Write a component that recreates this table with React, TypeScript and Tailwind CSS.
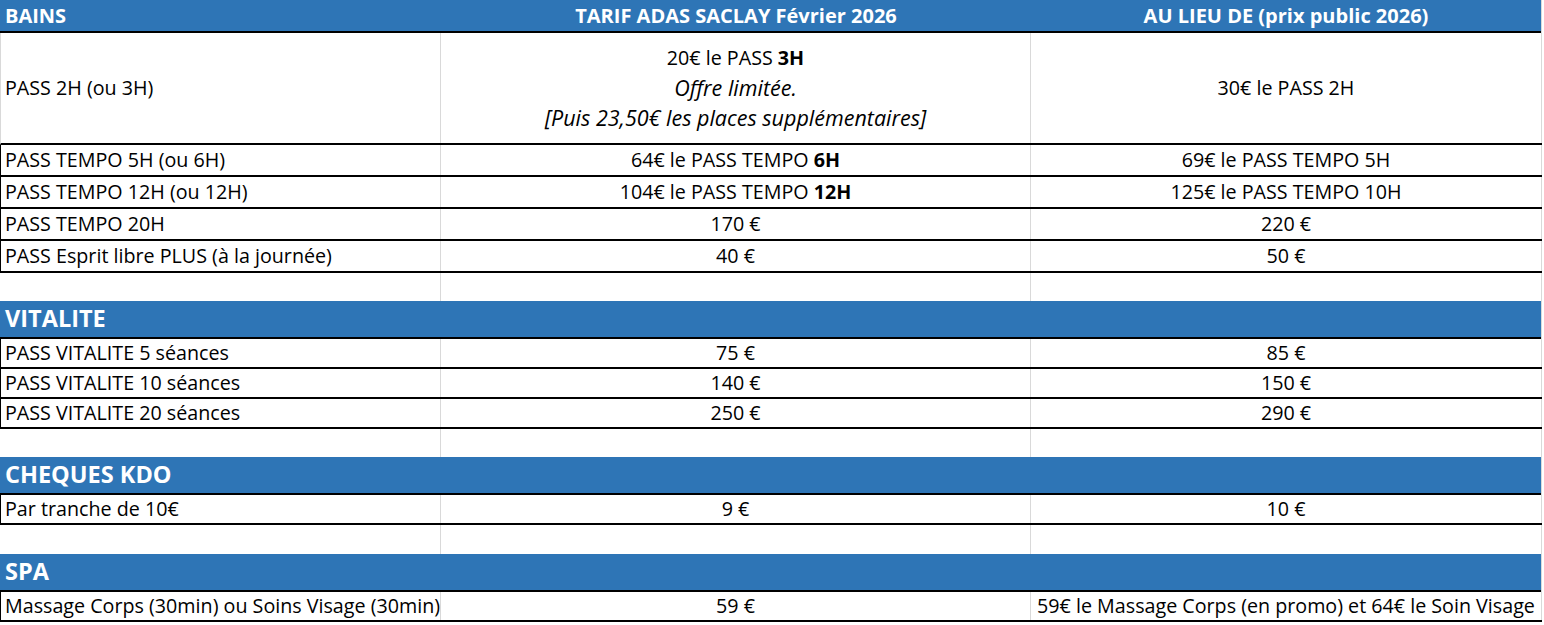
import type { ReactNode } from "react";

type Line = { label: ReactNode; adas: ReactNode; public: ReactNode };

const cellBase = "flex items-center border-r border-[#d9d9d9]";

const DataRow = ({
  label,
  adas,
  public: pub,
  height,
  leftGray,
}: Line & { height: string; leftGray?: boolean }) => (
  <div
    className={`flex w-[1542px] border-b-2 border-black ${height} ${
      leftGray ? "border-l border-l-[#d9d9d9]" : "border-l border-l-black"
    }`}
  >
    <div className={`${cellBase} w-[440px] pl-[4px] whitespace-nowrap`}>{label}</div>
    <div className={`${cellBase} w-[590px] justify-center text-center whitespace-nowrap`}>{adas}</div>
    <div className={`${cellBase} w-[511px] justify-center text-center whitespace-nowrap`}>{pub}</div>
  </div>
);

const EmptyRow = ({ height }: { height: string }) => (
  <div className={`flex w-[1542px] ${height}`}>
    <div className="w-[441px] border-r border-[#d9d9d9]" />
    <div className="w-[590px] border-r border-[#d9d9d9]" />
    <div className="w-[511px] border-r border-[#d9d9d9]" />
  </div>
);

const SectionRow = ({ title }: { title: string }) => (
  <div className="flex w-[1542px] border-r border-[#d9d9d9]">
    <div className="flex h-[38px] w-[1541px] items-center border-b-2 border-black bg-[#2e75b6] pl-[5px] text-[23.5px] font-bold text-white">
      {title}
    </div>
  </div>
);

const bains: Line[] = [
  {
    label: "PASS TEMPO 5H (ou 6H)",
    adas: (
      <span>
        64€ le PASS TEMPO <b>6H</b>
      </span>
    ),
    public: "69€ le PASS TEMPO 5H",
  },
  {
    label: "PASS TEMPO 12H (ou 12H)",
    adas: (
      <span>
        104€ le PASS TEMPO <b>12H</b>
      </span>
    ),
    public: "125€ le PASS TEMPO 10H",
  },
  { label: "PASS TEMPO 20H", adas: "170 €", public: "220 €" },
  { label: "PASS Esprit libre PLUS (à la journée)", adas: "40 €", public: "50 €" },
];

const vitalite: Line[] = [
  { label: "PASS VITALITE 5 séances", adas: "75 €", public: "85 €" },
  { label: "PASS VITALITE 10 séances", adas: "140 €", public: "150 €" },
  { label: "PASS VITALITE 20 séances", adas: "250 €", public: "290 €" },
];

export default function App() {
  return (
    <div className="h-[625px] w-[1544px] overflow-hidden bg-white font-['Open_Sans','Liberation_Sans',sans-serif] text-[19.7px] text-black">
      {/* header */}
      <div className="flex w-[1542px] border-r border-[#d9d9d9]">
        <div className="flex h-[33px] w-[1541px] border-b-2 border-black bg-[#2e75b6] text-[20px] font-bold text-white">
          <div className="flex w-[441px] items-center pl-[5px]">BAINS</div>
          <div className="flex w-[590px] items-center justify-center">TARIF ADAS SACLAY Février 2026</div>
          <div className="flex w-[510px] items-center justify-center">AU LIEU DE (prix public 2026)</div>
        </div>
      </div>

      <DataRow
        height="h-[112px]"
        leftGray
        label="PASS 2H (ou 3H)"
        adas={
          <div className="flex flex-col leading-[30px]">
            <span>
              20€ le PASS <b>3H</b>
            </span>
            <i className="text-[21.5px]">Offre limitée.</i>
            <i className="text-[21.5px]">[Puis 23,50€ les places supplémentaires]</i>
          </div>
        }
        public="30€ le PASS 2H"
      />
      {bains.map((r, i) => (
        <DataRow key={i} height="h-[32px]" {...r} />
      ))}
      <EmptyRow height="h-[28px]" />

      <SectionRow title="VITALITE" />
      {vitalite.map((r, i) => (
        <DataRow key={i} height="h-[30px]" {...r} />
      ))}
      <EmptyRow height="h-[28px]" />

      <SectionRow title="CHEQUES KDO" />
      <DataRow height="h-[30px]" label="Par tranche de 10€" adas="9 €" public="10 €" />
      <EmptyRow height="h-[29px]" />

      <SectionRow title="SPA" />
      <DataRow
        height="h-[30px]"
        label="Massage Corps (30min) ou Soins Visage (30min)"
        adas="59 €"
        public="59€ le Massage Corps (en promo) et 64€ le Soin Visage"
      />
    </div>
  );
}
